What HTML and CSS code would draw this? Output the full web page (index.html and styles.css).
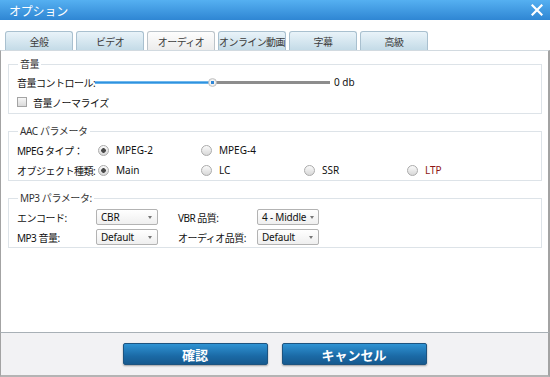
FILE: index.html
```html
<!DOCTYPE html>
<html lang="ja">
<head>
    <meta charset="UTF-8">
    <meta name="viewport" content="width=device-width, initial-scale=1.0">
    <title>オプション</title>
    <link rel="stylesheet" href="styles.css">
</head>
<body>
    <div class="window">
        <div class="titlebar">
            <span class="title">オプション</span>
            <svg class="close" width="12" height="12" viewBox="0 0 12 12">
                <path d="M1.5 1.5 L10.5 10.5 M10.5 1.5 L1.5 10.5" stroke="#fff" stroke-width="2.2" stroke-linecap="square"/>
            </svg>
        </div>

        <div class="tabs">
            <div class="tab">全般</div>
            <div class="tab">ビデオ</div>
            <div class="tab active">オーディオ</div>
            <div class="tab">オンライン動画</div>
            <div class="tab">字幕</div>
            <div class="tab">高級</div>
        </div>

        <div class="panel">
            <div class="group first">
                <span class="legend">音量</span>
                <div class="row">
                    <span class="label vol-label">音量コントロール:</span>
                    <div class="slider">
                        <div class="fill" style="width: 117px;"></div>
                        <div class="thumb" style="left: 113px;"></div>
                    </div>
                    <span class="db">0 db</span>
                </div>
                <div class="row">
                    <span class="checkbox"></span>
                    <span class="label">音量ノーマライズ</span>
                </div>
            </div>

            <div class="group">
                <span class="legend">AAC パラメータ</span>
                <div class="row">
                    <span class="label aac-label">MPEG タイプ：</span>
                    <span class="opt"><span class="radio checked"></span>MPEG-2</span>
                    <span class="opt"><span class="radio"></span>MPEG-4</span>
                </div>
                <div class="row">
                    <span class="label aac-label">オブジェクト種類:</span>
                    <span class="opt"><span class="radio checked"></span>Main</span>
                    <span class="opt"><span class="radio"></span>LC</span>
                    <span class="opt"><span class="radio"></span>SSR</span>
                    <span class="opt"><span class="radio"></span><span class="ltp">LTP</span></span>
                </div>
            </div>

            <div class="group">
                <span class="legend">MP3 パラメータ:</span>
                <div class="row">
                    <span class="label mp3-label">エンコード:</span>
                    <span class="select">CBR<i class="arrow"></i></span>
                    <span class="label mp3-label second">VBR 品質:</span>
                    <span class="select">4 - Middle<i class="arrow"></i></span>
                </div>
                <div class="row">
                    <span class="label mp3-label">MP3 音量:</span>
                    <span class="select">Default<i class="arrow"></i></span>
                    <span class="label mp3-label second">オーディオ品質:</span>
                    <span class="select">Default<i class="arrow"></i></span>
                </div>
            </div>
        </div>

        <div class="footer">
            <button class="btn">確認</button>
            <button class="btn">キャンセル</button>
        </div>
    </div>
</body>
</html>
```

FILE: styles.css
```css
* { box-sizing: border-box; }
body {
    margin: 0;
    font-family: "Noto Sans", "Noto Sans CJK JP", sans-serif;
    font-size: 10px;
    color: #111;
    background: #fff;
}
.window {
    width: 550px;
    height: 377px;
    background: #fff;
}
.titlebar {
    height: 20px;
    background: linear-gradient(#55b0f1, #2f86d3);
    display: flex;
    align-items: center;
    justify-content: space-between;
    padding: 0 7px 0 9px;
}
.title {
    color: #fff;
    font-family: "Noto Sans CJK JP", sans-serif;
    font-size: 12px;
    letter-spacing: -0.2px;
}
.tabs {
    height: 30px;
    padding: 11px 0 0 5px;
    display: flex;
    gap: 3px;
}
.tab {
    width: 68px;
    height: 19px;
    border: 1px solid #a9c0cf;
    border-bottom: none;
    border-radius: 3px 3px 0 0;
    background: linear-gradient(#e9f3f9, #c4dbe7);
    color: #3c3c3c;
    font-family: "Noto Sans CJK JP", sans-serif;
    letter-spacing: -0.6px;
    display: flex;
    align-items: center;
    justify-content: center;
    white-space: nowrap;
    overflow: hidden;
}
.tab.active {
    background: linear-gradient(#fdfdfd, #ececec);
    border-color: #bcc4ca;
}
.panel {
    height: 282px;
    border-top: 1px solid #d2dae0;
    border-left: 1px solid #a3a3a3;
    border-right: 2px solid #a3a3a3;
    padding-top: 13px;
}
.group {
    position: relative;
    margin: 17px 6px 0 7px;
    border: 1px solid #dde3e8;
    padding: 8px 8px 0 8px;
}
.group.first {
    margin-top: 0;
    padding-top: 7px;
    padding-bottom: 1px;
}
.legend {
    position: absolute;
    top: -8px;
    left: 9px;
    padding: 0 2px;
    line-height: 14px;
    background: #fff;
    color: #333;
    font-family: "Noto Sans", "Noto Sans CJK JP", sans-serif;
    letter-spacing: -0.4px;
}
.row {
    height: 20px;
    display: flex;
    align-items: center;
    white-space: nowrap;
}
.label {
    font-family: "Noto Sans", "Noto Sans CJK JP", sans-serif;
    letter-spacing: -0.5px;
    flex: none;
}
.vol-label { width: 78px; }
.aac-label { width: 81px; }
.mp3-label { width: 79px; }
.mp3-label.second { margin-left: 20px; }

.slider {
    position: relative;
    width: 235px;
    height: 3px;
    background: #8d8d8d;
    flex: none;
}
.fill {
    height: 3px;
    background: linear-gradient(#8fcaf3, #2f92df 50%, #7fc0ef);
}
.thumb {
    position: absolute;
    top: -3px;
    width: 9px;
    height: 9px;
    border-radius: 50%;
    border: 1px solid #c4c4c4;
    background: radial-gradient(circle, #2f86d6 0 1.5px, #f4f4f4 2px, #d6d6d6);
}
.db { margin-left: 4px; }

.checkbox {
    width: 10px;
    height: 10px;
    border: 1px solid #a4a4a4;
    background: linear-gradient(#f6f6f6, #dadada);
    margin-right: 6px;
    flex: none;
}
.opt {
    width: 103px;
    display: flex;
    align-items: center;
    flex: none;
}
.radio {
    width: 11px;
    height: 11px;
    border-radius: 50%;
    border: 1px solid #ababab;
    background: linear-gradient(#fafafa, #d8d8d8);
    margin-right: 7px;
    flex: none;
}
.radio.checked {
    background: radial-gradient(circle, #4a4a4a 0 2px, transparent 2.6px), linear-gradient(#fafafa, #d8d8d8);
}
.ltp { color: #8e1414; }

.select {
    width: 62px;
    height: 16px;
    border: 1px solid #b3b3b3;
    border-radius: 2px;
    background: linear-gradient(#ffffff, #efefef);
    display: flex;
    align-items: center;
    justify-content: space-between;
    padding: 0 5px 0 4px;
    letter-spacing: -0.2px;
    flex: none;
}
.arrow {
    width: 0;
    height: 0;
    margin-left: 4px;
    border-left: 2.5px solid transparent;
    border-right: 2.5px solid transparent;
    border-top: 3px solid #777;
    flex: none;
}

.footer {
    height: 45px;
    background: #f2f2f4;
    border-top: 1px solid #a8b0b6;
    border-left: 1px solid #a3a3a3;
    border-right: 2px solid #a3a3a3;
    border-bottom: 2px solid #b4b4b4;
    padding-top: 10px;
    display: flex;
    justify-content: center;
    gap: 14px;
}
.btn {
    width: 145px;
    height: 22px;
    border: 1px solid #1d5480;
    border-radius: 2px;
    background: linear-gradient(#2f93d3, #1b6aa6 60%, #165a8f);
    box-shadow: 0 1px 2px rgba(0,0,0,0.35);
    color: #fff;
    font-family: "Noto Sans CJK JP", sans-serif;
    font-size: 13px;
    font-weight: bold;
    padding: 0;
    cursor: pointer;
}
```
